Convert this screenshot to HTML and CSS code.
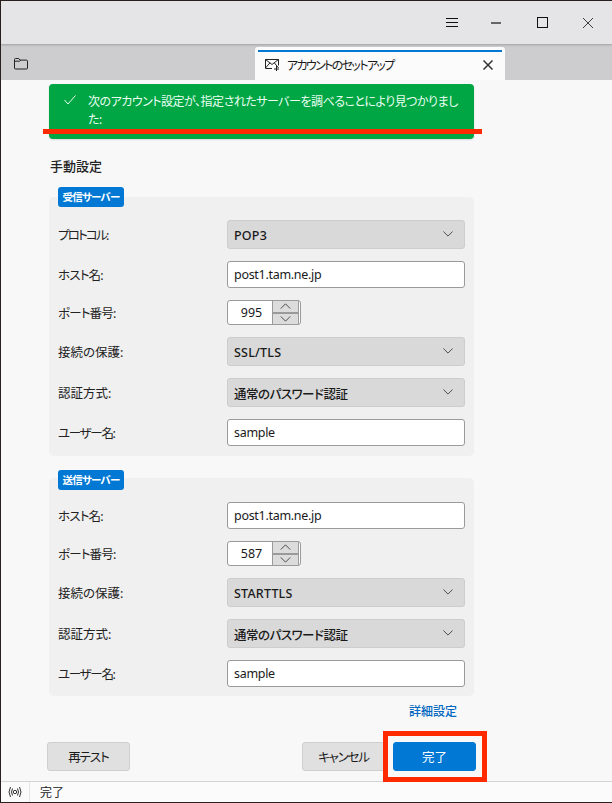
FILE: index.html
```html
<!DOCTYPE html>
<html lang="ja">
<head>
<meta charset="utf-8">
<title>アカウントのセットアップ</title>
<link rel="stylesheet" href="styles.css">
</head>
<body>
<div class="window">
  <header class="titlebar">
    <svg class="wb menu" viewBox="0 0 12 10"><path d="M0 .5h12M0 4.500h12M0 8.500h12" stroke="#111" fill="none"/></svg>
    <svg class="wb min" viewBox="0 0 10 10"><path d="M0 5h10" stroke="#111" stroke-width="1.200" fill="none"/></svg>
    <svg class="wb max" viewBox="0 0 11 11"><rect x=".5" y=".5" width="10" height="10" stroke="#111" fill="none"/></svg>
    <svg class="wb close" viewBox="0 0 10 10"><path d="M0 0l10 10M10 0L0 10" stroke="#111" stroke-width=".8" fill="none"/></svg>
  </header>
  <nav class="tabbar">
    <svg class="folder" viewBox="0 0 14 12"><path d="M.5 10V1.500q0-1 1-1h3.200l1.300 1.600h6.500q1 0 1 1V10q0 1-1 1h-11q-1 0-1-1zM.5 3.200h5.200l1-1.100" stroke="#222" fill="none"/></svg>
    <div class="tab">
      <svg class="tabicon" viewBox="0 0 15 13"><path d="M.5 1.500h13v6M7 10.500H.5v-9M.5 1.500l6.500 5 6.500-5M.5 10l4.500-5.200M13.500 10 9.500 5M11.500 8v5M9 11h5" stroke="#222" fill="none"/></svg>
      <span class="tablabel">アカウントのセットアップ</span>
      <svg class="tabclose" viewBox="0 0 10 10"><path d="M.5.5l9 9M9.500.5l-9 9" stroke="#333" stroke-width="1.500" fill="none"/></svg>
    </div>
  </nav>
  <main class="content">
    <div class="notice">
      <svg class="check" viewBox="0 0 12 10"><path d="M.5 5l3.500 4L11.500 .5" stroke="#e8fff0" fill="none"/></svg>
      <p>次のアカウント設定が、指定されたサーバーを調べることにより見つかりました:</p>
      <span class="redline"></span>
    </div>
    <h2 class="heading">手動設定</h2>

    <section class="group incoming">
      <div class="legend">受信サーバー</div>
      <div class="rows">
        <label class="kana-xl">プロトコル:</label>
        <div class="select">POP3<svg viewBox="0 0 12 7"><path d="M.5.5 6 6l5.500-5.500" stroke="#333" fill="none"/></svg></div>
        <label class="kana">ホスト名:</label>
        <div class="input">post1.tam.ne.jp</div>
        <label class="kana">ポート番号:</label>
        <div class="spinner">
          <span class="num">995</span>
          <span class="arrows">
            <span class="arrow"><svg viewBox="0 0 12 7"><path d="M.5 6.500 6 1l5.500 5.500" stroke="#333" fill="none"/></svg></span>
            <span class="arrow"><svg viewBox="0 0 12 7"><path d="M.5.5 6 6l5.500-5.500" stroke="#333" fill="none"/></svg></span>
          </span>
        </div>
        <label>接続の保護:</label>
        <div class="select">SSL/TLS<svg viewBox="0 0 12 7"><path d="M.5.5 6 6l5.500-5.500" stroke="#333" fill="none"/></svg></div>
        <label>認証方式:</label>
        <div class="select"><span class="auth">通常のパスワード認証</span><svg viewBox="0 0 12 7"><path d="M.5.5 6 6l5.500-5.500" stroke="#333" fill="none"/></svg></div>
        <label class="kana-user">ユーザー名:</label>
        <div class="input">sample</div>
      </div>
    </section>

    <section class="group outgoing">
      <div class="legend">送信サーバー</div>
      <div class="rows">
        <label class="kana">ホスト名:</label>
        <div class="input">post1.tam.ne.jp</div>
        <label class="kana">ポート番号:</label>
        <div class="spinner">
          <span class="num">587</span>
          <span class="arrows">
            <span class="arrow"><svg viewBox="0 0 12 7"><path d="M.5 6.500 6 1l5.500 5.500" stroke="#333" fill="none"/></svg></span>
            <span class="arrow"><svg viewBox="0 0 12 7"><path d="M.5.5 6 6l5.500-5.500" stroke="#333" fill="none"/></svg></span>
          </span>
        </div>
        <label>接続の保護:</label>
        <div class="select">STARTTLS<svg viewBox="0 0 12 7"><path d="M.5.5 6 6l5.500-5.500" stroke="#333" fill="none"/></svg></div>
        <label>認証方式:</label>
        <div class="select"><span class="auth">通常のパスワード認証</span><svg viewBox="0 0 12 7"><path d="M.5.5 6 6l5.500-5.500" stroke="#333" fill="none"/></svg></div>
        <label class="kana-user">ユーザー名:</label>
        <div class="input">sample</div>
      </div>
    </section>

    <div class="advanced"><a>詳細設定</a></div>

    <div class="actions">
      <button class="btn retest">再テスト</button>
      <span class="spacer"></span>
      <button class="btn cancel">キャンセル</button>
      <button class="btn primary">完了<span class="redbox"></span></button>
    </div>
  </main>
  <footer class="status">
    <span class="signal"><svg viewBox="0 0 16 12"><path d="M3.500 1Q.5 6 3.500 11M12.500 1q3 5 0 10M5.500 2.500q-2 3.500 0 7M10.500 2.500q2 3.500 0 7" stroke="#333" fill="none"/><circle cx="8" cy="6" r="1.700" stroke="#333" fill="none"/></svg></span>
    <span class="statustext">完了</span>
  </footer>
</div>
</body>
</html>
```
FILE: styles.css
```css
* { box-sizing: border-box; }
html, body { margin: 0; padding: 0; }
body {
  width: 612px;
  height: 803px;
  overflow: hidden;
  font-family: "Noto Sans", "Noto Sans CJK JP", sans-serif;
  font-feature-settings: "palt";
  font-size: 12.500px;
  color: #1a1a1a;
}
.window {
  width: 612px;
  height: 803px;
  border: 1px solid #2a2020;
  border-right-width: 0;
  display: flex;
  flex-direction: column;
  background: #f8f8f9;
}
.titlebar {
  height: 43px;
  flex: none;
  background: #e5e5e8;
  display: flex;
  align-items: center;
  justify-content: flex-end;
  position: relative;
  z-index: 1;
  box-shadow: 0 1px 2px rgba(0,0,0,.22);
}
.wb { display: block; flex: none; }
.menu { width: 12px; height: 10px; margin-right: 33px; }
.min { width: 10px; height: 10px; margin-right: 36px; }
.max { width: 11px; height: 11px; margin-right: 35px; }
.close { width: 10px; height: 10px; margin-right: 19px; }
.tabbar {
  height: 36px;
  flex: none;
  background: #cdcdd0;
  display: flex;
  align-items: flex-end;
}
.folder { width: 14px; height: 12px; margin: 0 0 10px 13px; flex: none; }
.tab {
  width: 250px;
  height: 33px;
  margin-left: 227px;
  background: #fbfbfc;
  border-radius: 3px 3px 0 0;
  display: flex;
  align-items: center;
  padding: 2px 12px 0 10px;
  position: relative;
}
.tab::before {
  content: "";
  position: absolute;
  left: 3px;
  right: 3px;
  top: 3px;
  height: 2px;
  background: #0078d4;
}
.tabicon { width: 15px; height: 13px; flex: none; margin-right: 7px; }
.tablabel { flex: 1; font-size: 12px; letter-spacing: -1.650px; white-space: nowrap; }
.tabclose { width: 10px; height: 10px; flex: none; }
.content {
  flex: 1;
  min-height: 0;
  padding: 4px 0 0 48px;
  display: flex;
  flex-direction: column;
}
.notice {
  width: 425px;
  height: 55px;
  flex: none;
  background: #00a544;
  color: #eafff2;
  border-radius: 4px;
  padding: 9px 14px 0 15px;
  display: flex;
  align-items: flex-start;
  position: relative;
  box-shadow: 0 1px 2px rgba(0,0,0,.12);
}
.check { width: 12px; height: 10px; flex: none; margin: 2px 12px 0 0; }
.notice p { margin: 0; line-height: 18px; font-size: 12px; letter-spacing: -.5px; }
.redline {
  position: absolute;
  left: -6px;
  top: 45px;
  width: 439px;
  height: 5px;
  background: #ff2a00;
}
.heading {
  margin: 18px 0 0 1px;
  height: 19px;
  line-height: 19px;
  font-size: 13px;
  font-weight: 500;
  color: #222;
}
.group {
  width: 425px;
  flex: none;
  background: #f0f0f0;
  border-radius: 5px;
  padding: 0 9px;
}
.incoming { margin-top: 21px; height: 259px; }
.outgoing { margin-top: 22px; height: 218px; }
.legend {
  width: 66px;
  height: 20px;
  background: #0078d4;
  color: #fff;
  border-radius: 3px;
  font-size: 10.500px;
  font-weight: 700;
  line-height: 20px;
  letter-spacing: -.8px;
  text-align: center;
  white-space: nowrap;
}
.incoming .legend { margin: -10px 0 13px; }
.outgoing .legend { margin: -8px 0 12px; }
.rows {
  display: grid;
  grid-template-columns: 169px 238px;
  row-gap: 12px;
  align-items: center;
}
.rows label { color: #222; font-size: 12.500px; white-space: nowrap; }
.rows .kana { letter-spacing: -.8px; }
.rows .kana-xl { letter-spacing: -1.800px; }
.rows .kana-user { letter-spacing: -1.300px; }
.select {
  height: 29px;
  background: #d9d9d9;
  border: 1px solid #cdcdcd;
  border-radius: 3px;
  padding: 1px 6px 0;
  display: flex;
  align-items: center;
  justify-content: space-between;
  font-weight: 500;
  letter-spacing: .2px;
}
.auth { letter-spacing: -.5px; }
.select svg { width: 10px; height: 6px; margin: -2px 5px 0 0; flex: none; }
.input {
  height: 27px;
  background: #fff;
  border: 1px solid #9a9a9a;
  border-radius: 3px;
  padding: 0 6px;
  display: flex;
  align-items: center;
  letter-spacing: -.3px;
}
.spinner {
  width: 74px;
  height: 25px;
  background: #fff;
  border: 1px solid #9a9a9a;
  border-radius: 3px;
  display: flex;
  overflow: hidden;
}
.num { width: 44px; text-align: center; line-height: 23px; padding-left: 3px; }
.arrows {
  width: 27px;
  border-left: 1px solid #9a9a9a;
  border-right: 1px solid #9a9a9a;
  display: flex;
  flex-direction: column;
  background: #dcdcdc;
  flex: none;
}
.arrow { flex: 1; display: flex; align-items: center; justify-content: center; }
.arrow:first-child { border-bottom: 2px solid #9a9a9a; }
.arrow svg { width: 11px; height: 6px; display: block; }
.advanced {
  width: 408px;
  height: 16px;
  margin-top: 8px;
  text-align: right;
  line-height: 16px;
  font-size: 12px;
  color: #0067c0;
  font-weight: 500;
}
.actions {
  width: 429px;
  margin: 22px 0 0 -2px;
  display: flex;
}
.spacer { flex: 1; }
.btn {
  width: 83px;
  height: 29px;
  padding: 0;
  border: 1px solid #cfcfcf;
  border-radius: 3px;
  background: #e0e0e0;
  color: #1a1a1a;
  font: inherit;
  font-feature-settings: inherit;
  position: relative;
}
.retest { letter-spacing: -1px; }
.cancel { width: 83px; margin-right: 8px; letter-spacing: -1.200px; }
.primary {
  background: #0078d4;
  border-color: #0078d4;
  color: #fff;
}
.redbox {
  position: absolute;
  left: -11px;
  top: -12px;
  width: 104px;
  height: 51px;
  border: 5px solid #ff2a00;
}
.status {
  height: 21px;
  flex: none;
  background: #fbfbfc;
  border-top: 1px solid #d4d4d4;
  display: flex;
  align-items: center;
}
.signal {
  width: 29px;
  height: 20px;
  border-right: 1px solid #e4e4e4;
  display: flex;
  align-items: center;
  justify-content: center;
  flex: none;
}
.signal svg { width: 16px; height: 12px; }
.statustext { margin-left: 10px; font-size: 12px; }
```
